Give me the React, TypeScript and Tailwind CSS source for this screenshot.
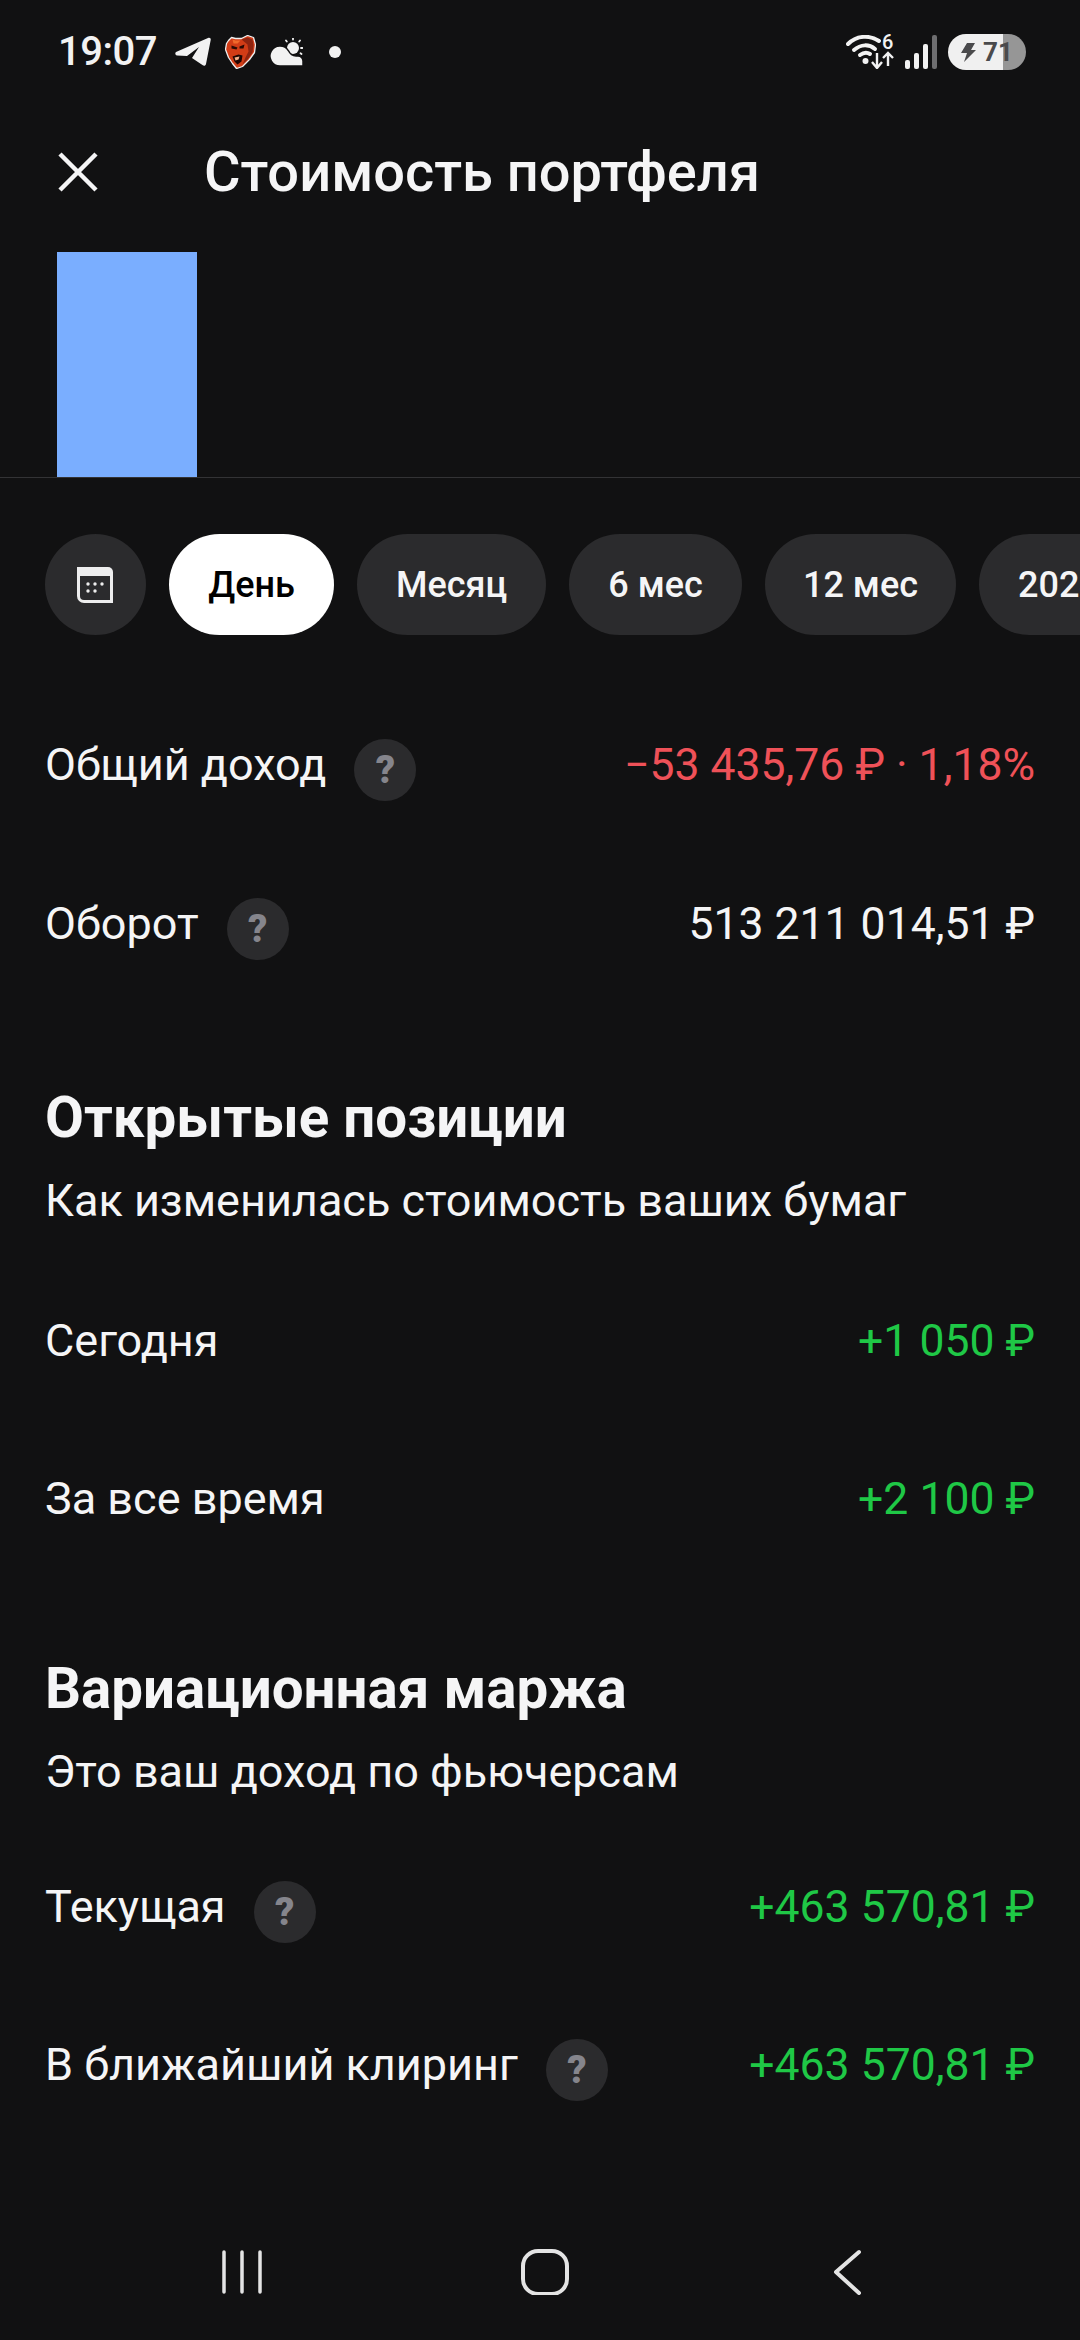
const font = { fontFamily: "Roboto, sans-serif" };

function HelpDot() {
  return (
    <span className="flex h-[62px] w-[62px] shrink-0 items-center justify-center rounded-full bg-[#2b2b2d] text-[38px] font-black text-[#85858c]">
      ?
    </span>
  );
}

function Row({ label, value, color, help, top }: { label: string; value: string; color: string; help?: boolean; top: string }) {
  return (
    <div className={`flex h-[60px] items-center justify-between px-[45px] text-[45px] leading-[60px] ${top}`}>
      <div className="flex items-center gap-[28px] text-[#f5f5f6]">
        <span>{label}</span>
        {help && (
          <span className="mt-[9px]">
            <HelpDot />
          </span>
        )}
      </div>
      <span className={`text-[44.5px] ${color}`}>{value}</span>
    </div>
  );
}

function Telegram() {
  return (
    <svg width="36" height="30" viewBox="0 0 36 30">
      <path d="M1 15 33 1c2-.8 3 .5 2.700 2L31 27c-.3 1.700-2 2.200-3.200 1.300L17 21 24 10 12 19 2 18.500c-1.700-.3-2.300-2.500-1-3.500Z" fill="#f2f2f2" />
    </svg>
  );
}

function Bear() {
  return (
    <svg width="31" height="34" viewBox="-.5 -.5 31 34">
      <path d="M3 5 6 2l4 1 6 0 6-3 6 2 2 7-1 8-5 7-7 7-6 2-4-5-4-6-3-8 1-6Z" fill="#d23c16" stroke="#efefef" strokeWidth="1.300" strokeLinejoin="round" />
      <path d="M16 4l6-2 5 2 1 6-1 7-5 7-5 5 3-7 3-6-1-7Z" fill="#8e2410" />
      <path d="M6 10l6 2-1 2-5-1Zm8 1 5-2-1 4-4 0Z" fill="#2b0a04" />
      <path d="M7 21l6-2 4 1-1 6-4 3-3-3Z" fill="#1f0603" />
      <path d="M9 22l5-1-1 3-3 1Z" fill="#f4b08a" />
      <path d="M7 4l3 1 5 0-3 3-4 0Z" fill="#f06a2c" />
    </svg>
  );
}

function Weather() {
  return (
    <svg width="33" height="28" viewBox="0 0 33 28">
      <circle cx="23" cy="10" r="6" fill="#f2f2f2" />
      <g stroke="#f2f2f2" strokeWidth="1.800" strokeLinecap="round">
        <path d="M23 0v1.500M16 2.500l.8 1M30 2.500l-.8 1M32.500 10H31M31.500 16l-1-.7" />
      </g>
      <path d="M10 28a10 10 0 1 1 8.500-15.200C20 16 23 18 26 18h2a5 5 0 0 1 5 5v5Z" fill="#f2f2f2" stroke="#111112" strokeWidth="1.500" />
    </svg>
  );
}

function Wifi() {
  return (
    <div className="relative h-[34px] w-[48px]">
      <svg width="48" height="34" viewBox="0 0 48 34" fill="none" stroke="#f2f2f2" strokeLinecap="round">
        <path d="M2 9C11 0 24 0 33 6" strokeWidth="4" />
        <path d="M8 15c7-6 15-6 21-1" strokeWidth="4" />
        <path d="M14 20c4-3 7-3 10-1" strokeWidth="4" />
        <circle cx="19.500" cy="26" r="3" fill="#f2f2f2" stroke="none" />
        <path d="M31 18v14M26 27l5 6 5-6" strokeWidth="2.400" strokeLinecap="butt" />
        <path d="M42 31V18M37 23l5-5 5 5" strokeWidth="2.400" strokeLinecap="butt" />
      </svg>
      <span className="absolute left-[36px] top-[-3px] text-[20px] font-medium leading-[20px] text-[#f2f2f2]">6</span>
    </div>
  );
}

function Signal() {
  return (
    <svg width="32" height="34" viewBox="0 0 32 34">
      <rect x="0" y="25" width="5" height="9" rx="2" fill="#f2f2f2" />
      <rect x="9" y="18" width="5" height="16" rx="2" fill="#f2f2f2" />
      <rect x="18" y="9" width="5" height="25" rx="2" fill="#f2f2f2" />
      <rect x="27" y="0" width="5" height="34" rx="2" fill="#6e6e70" />
    </svg>
  );
}

function Battery() {
  return (
    <div className="flex h-[36px] w-[78px] items-center overflow-hidden rounded-full bg-[linear-gradient(90deg,#f0f0f0_70%,#969696_70%)] pl-[12px]">
      <svg width="16" height="19" viewBox="0 0 16 19">
        <path d="M7 0h8l-4 7h5L4 19l3-9H1Z" fill="#4a4a4c" />
      </svg>
      <span className="ml-[7px] text-[26px] font-bold leading-none text-[#4a4a4c]">71</span>
    </div>
  );
}

function CalendarIcon() {
  return (
    <svg width="37" height="36" viewBox="0 0 37 36">
      <path d="M0 0h31a5 5 0 0 1 5 5v31H7a7 7 0 0 1-7-7Z" fill="#eeeeee" />
      <path d="M3 9h30v24H7a4 4 0 0 1-4-4Z" fill="#2b2b2d" />
      <g fill="#eeeeee">
        <circle cx="11" cy="17" r="1.700" />
        <circle cx="18" cy="17" r="1.700" />
        <circle cx="25" cy="17" r="1.700" />
        <circle cx="11" cy="24" r="1.700" />
        <circle cx="18" cy="24" r="1.700" />
      </g>
    </svg>
  );
}

export default function App() {
  return (
    <div className="flex h-[2340px] w-[1080px] flex-col overflow-hidden bg-[#111112] text-[#f5f5f6]" style={font}>
      {/* status bar */}
      <div className="flex h-[104px] items-center justify-between pl-[58px] pr-[54px]">
        <div className="flex items-center">
          <span className="text-[40px] font-medium tracking-[-0.5px] text-[#f2f2f2]">19:07</span>
          <span className="ml-[18px]"><Telegram /></span>
          <span className="ml-[14px]"><Bear /></span>
          <span className="ml-[14px]"><Weather /></span>
          <span className="ml-[26px] h-[12px] w-[12px] rounded-full bg-[#f2f2f2]" />
        </div>
        <div className="flex items-center">
          <Wifi />
          <span className="ml-[11px]"><Signal /></span>
          <span className="ml-[11px]"><Battery /></span>
        </div>
      </div>

      {/* header */}
      <div className="flex h-[148px] items-start pl-[58px] pt-[32px]">
        <svg width="40" height="40" viewBox="0 0 40 40" className="mt-[16px]" stroke="#f5f5f6" strokeWidth="4.500">
          <path d="M2 2l36 36M38 2 2 38" />
        </svg>
        <h1 className="ml-[106px] text-[56px] font-medium leading-[72px]">Стоимость портфеля</h1>
      </div>

      {/* chart */}
      <div className="h-[226px] border-b border-[#333335] pl-[57px]">
        <div className="h-full w-[140px] bg-[#7aaeff]" />
      </div>

      {/* periods */}
      <div className="mt-[56px] flex h-[101px] shrink-0 gap-[23px] overflow-hidden pl-[45px] text-[36px] font-medium">
        <div className="flex w-[101px] shrink-0 items-center justify-center rounded-full bg-[#2b2b2d]">
          <CalendarIcon />
        </div>
        <div className="flex w-[165px] shrink-0 items-center justify-center rounded-full bg-white text-black">День</div>
        <div className="flex w-[189px] shrink-0 items-center justify-center rounded-full bg-[#2b2b2d]">Месяц</div>
        <div className="flex w-[173px] shrink-0 items-center justify-center rounded-full bg-[#2b2b2d]">6 мес</div>
        <div className="flex w-[191px] shrink-0 items-center justify-center rounded-full bg-[#2b2b2d]">12 мес</div>
        <div className="flex w-[160px] shrink-0 items-center justify-center rounded-full bg-[#2b2b2d]">2024</div>
      </div>

      <Row top="mt-[100px]" label="Общий доход" value="−53 435,76 ₽ · 1,18%" color="text-[#ef5158]" help />
      <Row top="mt-[99px]" label="Оборот" value="513 211 014,51 ₽" color="text-[#f5f5f6]" help />

      <h2 className="mt-[132px] px-[45px] text-[56.5px] font-bold leading-[64px]">Открытые позиции</h2>
      <p className="mt-[21px] px-[45px] text-[45px] leading-[60px]">Как изменилась стоимость ваших бумаг</p>

      <Row top="mt-[80px]" label="Сегодня" value="+1 050 ₽" color="text-[#1fc846]" />
      <Row top="mt-[98px]" label="За все время" value="+2 100 ₽" color="text-[#1fc846]" />

      <h2 className="mt-[128px] px-[45px] text-[56.5px] font-bold leading-[64px]">Вариационная маржа</h2>
      <p className="mt-[21px] px-[45px] text-[45px] leading-[60px]">Это ваш доход по фьючерсам</p>

      <Row top="mt-[75px]" label="Текущая" value="+463 570,81 ₽" color="text-[#1fc846]" help />
      <Row top="mt-[98px]" label="В ближайший клиринг" value="+463 570,81 ₽" color="text-[#1fc846]" help />

      {/* nav bar */}
      <div className="mt-[154px] flex h-[46px] items-center">
        <svg width="1080" height="46" viewBox="0 0 1080 46" fill="none" stroke="#e4e4e4" strokeLinecap="round">
          <path d="M224 3v40M242 3v40M260 3v40" strokeWidth="3.500" />
          <rect x="523" y="2" width="44" height="43" rx="15" strokeWidth="4" />
          <path d="M859 3 836 23l23 21" strokeWidth="4" strokeLinejoin="round" />
        </svg>
      </div>
    </div>
  );
}
